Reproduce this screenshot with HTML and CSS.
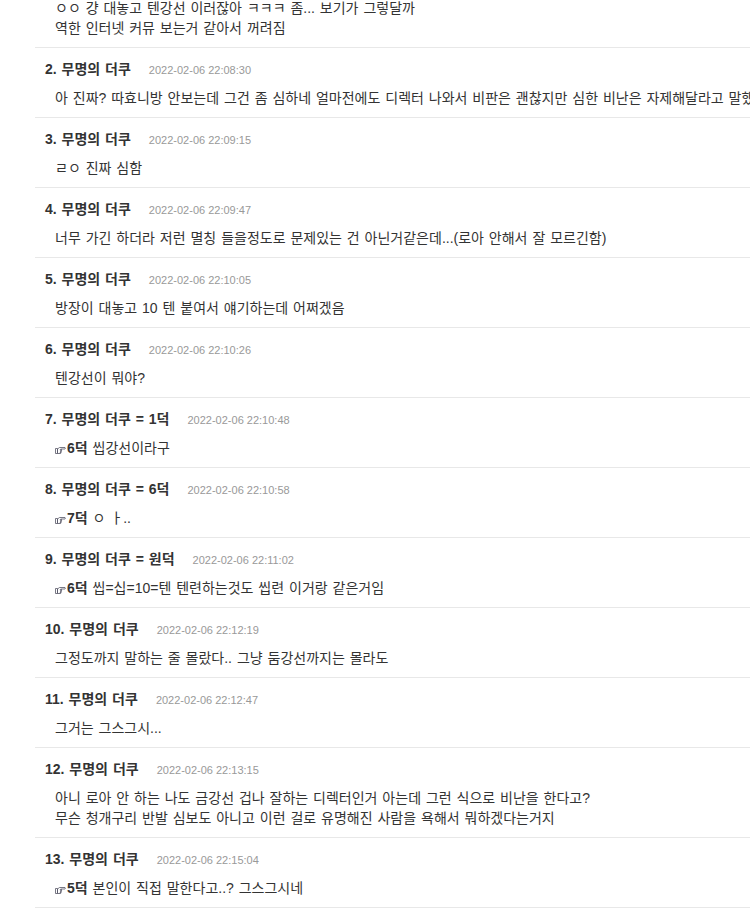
FILE: index.html
```html
<!DOCTYPE html>
<html lang="ko">
<head>
<meta charset="utf-8">
<link rel="stylesheet" href="styles.css">
</head>
<body>
<div class="page">
  <ul class="comments">
    <li class="comment first">
      <div class="text">ㅇㅇ 걍 대놓고 텐강선 이러잖아 ㅋㅋㅋ 좀... 보기가 그렇달까<br>역한 인터넷 커뮤 보는거 같아서 꺼려짐</div>
    </li>
    <li class="comment">
      <div class="head"><span class="name">2. 무명의 더쿠</span><span class="date">2022-02-06 22:08:30</span></div>
      <div class="text">아 진짜? 따효니방 안보는데 그건 좀 심하네 얼마전에도 디렉터 나와서 비판은 괜찮지만 심한 비난은 자제해달라고 말했는데</div>
    </li>
    <li class="comment">
      <div class="head"><span class="name">3. 무명의 더쿠</span><span class="date">2022-02-06 22:09:15</span></div>
      <div class="text">ㄹㅇ 진짜 심함</div>
    </li>
    <li class="comment">
      <div class="head"><span class="name">4. 무명의 더쿠</span><span class="date">2022-02-06 22:09:47</span></div>
      <div class="text">너무 가긴 하더라 저런 멸칭 들을정도로 문제있는 건 아닌거같은데...(로아 안해서 잘 모르긴함)</div>
    </li>
    <li class="comment">
      <div class="head"><span class="name">5. 무명의 더쿠</span><span class="date">2022-02-06 22:10:05</span></div>
      <div class="text">방장이 대놓고 10 텐 붙여서 얘기하는데 어쩌겠음</div>
    </li>
    <li class="comment">
      <div class="head"><span class="name">6. 무명의 더쿠</span><span class="date">2022-02-06 22:10:26</span></div>
      <div class="text">텐강선이 뭐야?</div>
    </li>
    <li class="comment">
      <div class="head"><span class="name">7. 무명의 더쿠 = 1덕</span><span class="date">2022-02-06 22:10:48</span></div>
      <div class="text"><span class="ref"><svg class="hand" viewBox="0 0 11 7" width="11" height="7"><path d="M0.5 1.5h2v5h-2z M2.5 2L4.5 0.5H10Q10.8 1.25 10 2H6.2L6.6 3.2L6.3 4.3L6.1 5.4L5.6 6.5H2.5Z M6.2 2.1L4.8 2.6 M6.5 3.3H5 M6.2 4.4H5 M6 5.5H4.8" /></svg>6덕</span> 씹강선이라구</div>
    </li>
    <li class="comment">
      <div class="head"><span class="name">8. 무명의 더쿠 = 6덕</span><span class="date">2022-02-06 22:10:58</span></div>
      <div class="text"><span class="ref"><svg class="hand" viewBox="0 0 11 7" width="11" height="7"><path d="M0.5 1.5h2v5h-2z M2.5 2L4.5 0.5H10Q10.8 1.25 10 2H6.2L6.6 3.2L6.3 4.3L6.1 5.4L5.6 6.5H2.5Z M6.2 2.1L4.8 2.6 M6.5 3.3H5 M6.2 4.4H5 M6 5.5H4.8" /></svg>7덕</span> ㅇ ㅏ..</div>
    </li>
    <li class="comment">
      <div class="head"><span class="name">9. 무명의 더쿠 = 원덕</span><span class="date">2022-02-06 22:11:02</span></div>
      <div class="text"><span class="ref"><svg class="hand" viewBox="0 0 11 7" width="11" height="7"><path d="M0.5 1.5h2v5h-2z M2.5 2L4.5 0.5H10Q10.8 1.25 10 2H6.2L6.6 3.2L6.3 4.3L6.1 5.4L5.6 6.5H2.5Z M6.2 2.1L4.8 2.6 M6.5 3.3H5 M6.2 4.4H5 M6 5.5H4.8" /></svg>6덕</span> 씹=십=10=텐 텐련하는것도 씹련 이거랑 같은거임</div>
    </li>
    <li class="comment">
      <div class="head"><span class="name">10. 무명의 더쿠</span><span class="date">2022-02-06 22:12:19</span></div>
      <div class="text">그정도까지 말하는 줄 몰랐다.. 그냥 둠강선까지는 몰라도</div>
    </li>
    <li class="comment">
      <div class="head"><span class="name">11. 무명의 더쿠</span><span class="date">2022-02-06 22:12:47</span></div>
      <div class="text">그거는 그스그시...</div>
    </li>
    <li class="comment">
      <div class="head"><span class="name">12. 무명의 더쿠</span><span class="date">2022-02-06 22:13:15</span></div>
      <div class="text">아니 로아 안 하는 나도 금강선 겁나 잘하는 디렉터인거 아는데 그런 식으로 비난을 한다고?<br>무슨 청개구리 반발 심보도 아니고 이런 걸로 유명해진 사람을 욕해서 뭐하겠다는거지</div>
    </li>
    <li class="comment">
      <div class="head"><span class="name">13. 무명의 더쿠</span><span class="date">2022-02-06 22:15:04</span></div>
      <div class="text"><span class="ref"><svg class="hand" viewBox="0 0 11 7" width="11" height="7"><path d="M0.5 1.5h2v5h-2z M2.5 2L4.5 0.5H10Q10.8 1.25 10 2H6.2L6.6 3.2L6.3 4.3L6.1 5.4L5.6 6.5H2.5Z M6.2 2.1L4.8 2.6 M6.5 3.3H5 M6.2 4.4H5 M6 5.5H4.8" /></svg>5덕</span> 본인이 직접 말한다고..? 그스그시네</div>
    </li>
  </ul>
</div>
</body>
</html>
```

FILE: styles.css
```css
html, body {
  margin: 0;
  padding: 0;
  background: #fff;
  overflow: hidden;
}

body {
  font-family: "Liberation Sans", "Noto Sans CJK KR", sans-serif;
  color: #333;
  font-size: 13px;
}

.page {
  width: 1100px;
  margin-top: -2px;
  padding-left: 35px;
}

.comments {
  list-style: none;
  margin: 0;
  padding: 0;
}

.comment {
  border-bottom: 1px solid #e8e8e8;
  padding: 11px 0 9px;
}

.comment.first {
  padding-top: 0;
}

.head {
  padding-left: 10px;
  line-height: 20px;
  height: 20px;
  margin-bottom: 9px;
  white-space: nowrap;
}

.name {
  font-weight: bold;
  color: #333;
  font-size: 14px;
  word-spacing: 1px;
}

.date {
  margin-left: 18px;
  font-size: 11px;
  color: #999;
}

.text {
  padding-left: 20px;
  line-height: 20px;
  font-size: 14px;
  word-spacing: 1px;
  white-space: nowrap;
}

.ref {
  font-weight: bold;
}

.hand {
  display: inline-block;
  vertical-align: -1px;
  margin-right: 1px;
  fill: #fff;
  stroke: #556;
  stroke-width: 0.8;
  stroke-linejoin: round;
}
```
